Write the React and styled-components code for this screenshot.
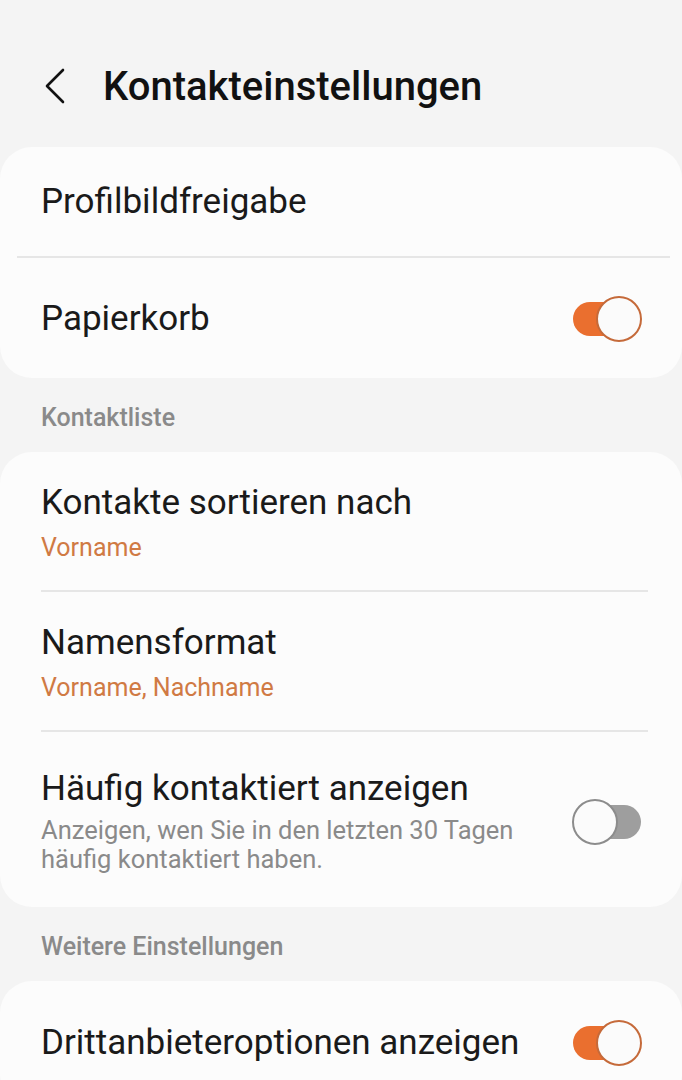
import React from "react";
import styled, { createGlobalStyle } from "styled-components";

const GlobalStyle = createGlobalStyle`
  html, body {
    margin: 0;
    padding: 0;
    background: #f4f4f4;
  }
  body {
    font-family: Roboto, "Noto Sans", "Liberation Sans", sans-serif;
    -webkit-font-smoothing: antialiased;
  }
`;

const Screen = styled.div`
  width: 682px;
  height: 1080px;
  overflow: hidden;
  background: #f4f4f4;
`;

// 상단 제목 영역
const Header = styled.div`
  display: flex;
  align-items: center;
  height: 72px;
  padding: 50px 0 0 43px;
  margin-bottom: 25px;
  gap: 36px;
`;

const BackButton = styled.button`
  border: 0;
  background: none;
  padding: 0;
  width: 24px;
  height: 38px;
  display: flex;
  align-items: center;
`;

const Title = styled.h1`
  margin: 0;
  font-size: 40px;
  font-weight: 500;
  color: #111;
`;

const Card = styled.div`
  background: #fcfcfc;
  border-radius: 32px;
  display: flex;
  flex-direction: column;
`;

const Row = styled.div`
  display: flex;
  align-items: center;
  padding: ${(p) => p.$pad || "31px 40px 27px 41px"};
  gap: 20px;
`;

const RowText = styled.div`
  flex: 1;
  display: flex;
  flex-direction: column;
`;

const Label = styled.div`
  font-size: 35px;
  line-height: 40px;
  color: #1a1a1a;
`;

const Value = styled.div`
  font-size: 25px;
  line-height: 30px;
  margin-top: 10px;
  color: #d07a44;
`;

const Hint = styled.div`
  font-size: 25.5px;
  line-height: 29px;
  margin-top: 7px;
  color: #8a8a8a;
`;

const Divider = styled.div`
  height: 2px;
  background: #e6e6e6;
  margin: ${(p) => p.$inset || "0 34px 0 41px"};
`;

const Section = styled.div`
  padding: 27px 41px 21px;
  font-size: 25px;
  line-height: 26px;
  font-weight: 500;
  color: #8a8a8a;
`;

const Track = styled.div`
  position: relative;
  width: 70px;
  height: 46px;
  flex-shrink: 0;
  &::before {
    content: "";
    position: absolute;
    left: 1px;
    right: 1px;
    top: 6px;
    bottom: 6px;
    border-radius: 17px;
    background: ${(p) => (p.$on ? "#ea6f2f" : "#9e9e9e")};
  }
`;

const Thumb = styled.div`
  position: absolute;
  top: 0;
  ${(p) => (p.$on ? "right: 0;" : "left: 0;")}
  width: 42px;
  height: 42px;
  border-radius: 50%;
  background: #fbfbfb;
  border: 2px solid ${(p) => (p.$on ? "#c56a3a" : "#8c8c8c")};
`;

const Toggle = ({ on }) => (
  <Track $on={on}>
    <Thumb $on={on} />
  </Track>
);

const ChevronLeft = () => (
  <svg width="24" height="38" viewBox="0 0 24 38" fill="none">
    <path d="M20 3 L4 19 L20 35" stroke="#111" strokeWidth="2.6" strokeLinecap="round" strokeLinejoin="round" />
  </svg>
);

const App = () => {
  return (
    <>
      <GlobalStyle />
      <Screen>
        <Header>
          <BackButton>
            <ChevronLeft />
          </BackButton>
          <Title>Kontakteinstellungen</Title>
        </Header>

        <Card>
          <Row $pad="35px 40px 34px 41px">
            <RowText>
              <Label>Profilbildfreigabe</Label>
            </RowText>
          </Row>
          <Divider $inset="0 12px 0 17px" />
          <Row $pad="38px 40px 36px 41px">
            <RowText>
              <Label>Papierkorb</Label>
            </RowText>
            <Toggle on />
          </Row>
        </Card>

        <Section>Kontaktliste</Section>

        <Card>
          <Row>
            <RowText>
              <Label>Kontakte sortieren nach</Label>
              <Value>Vorname</Value>
            </RowText>
          </Row>
          <Divider />
          <Row>
            <RowText>
              <Label>Namensformat</Label>
              <Value>Vorname, Nachname</Value>
            </RowText>
          </Row>
          <Divider />
          <Row $pad="37px 40px 33px 41px">
            <RowText>
              <Label>Häufig kontaktiert anzeigen</Label>
              <Hint>
                Anzeigen, wen Sie in den letzten 30 Tagen
                <br />
                häufig kontaktiert haben.
              </Hint>
            </RowText>
            <Toggle on={false} />
          </Row>
        </Card>

        <Section>Weitere Einstellungen</Section>

        <Card>
          <Row $pad="39px 40px 40px 41px">
            <RowText>
              <Label>Drittanbieteroptionen anzeigen</Label>
            </RowText>
            <Toggle on />
          </Row>
        </Card>
      </Screen>
    </>
  );
};

export default App;
